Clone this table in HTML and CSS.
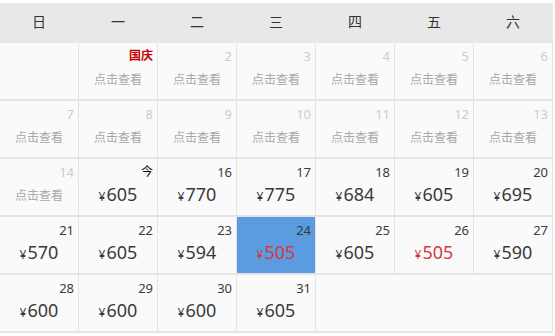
FILE: index.html
```html
<!DOCTYPE html>
<html lang="zh-CN">
<head>
<meta charset="utf-8">
<title>价格日历</title>
<link rel="stylesheet" href="styles.css">
</head>
<body>
<div class="calendar">
  <div class="week-head">
    <div class="wd">日</div><div class="wd">一</div><div class="wd">二</div><div class="wd">三</div><div class="wd">四</div><div class="wd">五</div><div class="wd">六</div>
  </div>
  <div class="days">
    <div class="day"></div>
    <div class="day past"><span class="num holiday">国庆</span><span class="see">点击查看</span></div>
    <div class="day past"><span class="num">2</span><span class="see">点击查看</span></div>
    <div class="day past"><span class="num">3</span><span class="see">点击查看</span></div>
    <div class="day past"><span class="num">4</span><span class="see">点击查看</span></div>
    <div class="day past"><span class="num">5</span><span class="see">点击查看</span></div>
    <div class="day past"><span class="num">6</span><span class="see">点击查看</span></div>

    <div class="day past"><span class="num">7</span><span class="see">点击查看</span></div>
    <div class="day past"><span class="num">8</span><span class="see">点击查看</span></div>
    <div class="day past"><span class="num">9</span><span class="see">点击查看</span></div>
    <div class="day past"><span class="num">10</span><span class="see">点击查看</span></div>
    <div class="day past"><span class="num">11</span><span class="see">点击查看</span></div>
    <div class="day past"><span class="num">12</span><span class="see">点击查看</span></div>
    <div class="day past"><span class="num">13</span><span class="see">点击查看</span></div>

    <div class="day past"><span class="num">14</span><span class="see">点击查看</span></div>
    <div class="day"><span class="num today">今</span><span class="price"><i>¥</i>605</span></div>
    <div class="day"><span class="num">16</span><span class="price"><i>¥</i>770</span></div>
    <div class="day"><span class="num">17</span><span class="price"><i>¥</i>775</span></div>
    <div class="day"><span class="num">18</span><span class="price"><i>¥</i>684</span></div>
    <div class="day"><span class="num">19</span><span class="price"><i>¥</i>605</span></div>
    <div class="day"><span class="num">20</span><span class="price"><i>¥</i>695</span></div>

    <div class="day"><span class="num">21</span><span class="price"><i>¥</i>570</span></div>
    <div class="day"><span class="num">22</span><span class="price"><i>¥</i>605</span></div>
    <div class="day"><span class="num">23</span><span class="price"><i>¥</i>594</span></div>
    <div class="day selected"><span class="num">24</span><span class="price low"><i>¥</i>505</span></div>
    <div class="day"><span class="num">25</span><span class="price"><i>¥</i>605</span></div>
    <div class="day"><span class="num">26</span><span class="price low"><i>¥</i>505</span></div>
    <div class="day"><span class="num">27</span><span class="price"><i>¥</i>590</span></div>

    <div class="day"><span class="num">28</span><span class="price"><i>¥</i>600</span></div>
    <div class="day"><span class="num">29</span><span class="price"><i>¥</i>600</span></div>
    <div class="day"><span class="num">30</span><span class="price"><i>¥</i>600</span></div>
    <div class="day"><span class="num">31</span><span class="price"><i>¥</i>605</span></div>
    <div class="day filler"></div>
  </div>
</div>
</body>
</html>
```
FILE: styles.css
```css
html, body {
  margin: 0;
  padding: 0;
  background: #ffffff;
}

body {
  font-family: "Noto Sans", "Noto Sans CJK SC", sans-serif;
  color: #333333;
}

.calendar {
  width: 553px;
  padding-top: 3px;
}

/* weekday header */
.week-head {
  display: grid;
  grid-template-columns: repeat(7, 78px);
  column-gap: 1px;
  background: #ececec;
  padding-right: 1px;
}

.wd {
  height: 40px;
  line-height: 38px;
  text-align: center;
  font-size: 14px;
  background: #e8e8e8;
  color: #333333;
}

/* day cells */
.days {
  display: grid;
  grid-template-columns: repeat(7, 78px);
  grid-auto-rows: 56px;
  column-gap: 1px;
  row-gap: 2px;
  background: #e4e4e4;
  padding: 0 1px 2px 0;
}

.day {
  background: #fafafa;
  display: flex;
  flex-direction: column;
  align-items: center;
}

.day.filler {
  grid-column: span 3;
}

.day.selected {
  background: #5b9ce1;
}

.num {
  align-self: stretch;
  text-align: right;
  padding: 5px 4px 0 0;
  font-size: 13px;
  line-height: 16px;
  height: 16px;
  color: #3a3a3a;
}

.past .num {
  color: #cccccc;
}

.num.holiday {
  color: #c40000;
  font-weight: bold;
  font-size: 12px;
}

.num.today {
  color: #111111;
  font-size: 12px;
}

.see {
  margin-top: 6px;
  font-size: 12px;
  line-height: 20px;
  color: #a8a8a8;
}

.price {
  margin-top: 1px;
  font-size: 18px;
  line-height: 26px;
  color: #3a3a3a;
}

.price i {
  font-style: normal;
  font-size: 12px;
  margin-right: 1px;
}

.price.low {
  color: #d8373f;
}
```
